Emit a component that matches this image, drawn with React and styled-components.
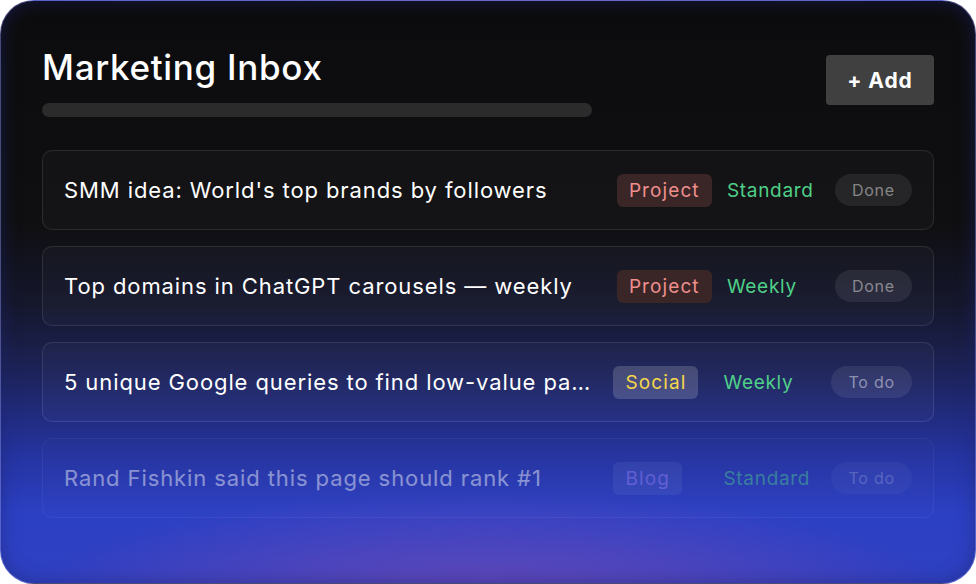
import styled, { createGlobalStyle } from "styled-components";

const tasks = [
  { title: "SMM idea: World's top brands by followers", tag: "project", freq: "Standard", status: "Done" },
  { title: "Top domains in ChatGPT carousels — weekly", tag: "project", freq: "Weekly", status: "Done" },
  { title: "5 unique Google queries to find low-value pages to noindex", tag: "social", freq: "Weekly", status: "To do" },
  { title: "Rand Fishkin said this page should rank #1", tag: "blog", freq: "Standard", status: "To do", faded: true },
];

const tagLabels = { project: "Project", social: "Social", blog: "Blog" };

const tagColors = {
  project: { bg: "#3a2627", fg: "#ee8f8d" },
  social: { bg: "rgba(255,255,255,0.17)", fg: "#f6d84a" },
  blog: { bg: "rgba(255,255,255,0.12)", fg: "#a58eff" },
};

export default function App() {
  return (
    <>
      <GlobalStyle />
      <Card>
        <Header>
          <div>
            <Title>Marketing Inbox</Title>
            <Bar />
          </div>
          <AddButton>+ Add</AddButton>
        </Header>
        <List>
          {tasks.map((t) => (
            <Row key={t.title} $faded={t.faded}>
              <RowTitle>{t.title}</RowTitle>
              <TagCell>
                <Tag $kind={t.tag}>{tagLabels[t.tag]}</Tag>
              </TagCell>
              <Freq>{t.freq}</Freq>
              <Status>{t.status}</Status>
            </Row>
          ))}
        </List>
      </Card>
    </>
  );
}

const GlobalStyle = createGlobalStyle`
  html, body {
    margin: 0;
    padding: 0;
    background: #ffffff;
  }
  body {
    font-family: Inter, "Liberation Sans", sans-serif;
  }
`;

const Card = styled.div`
  box-sizing: border-box;
  width: 976px;
  height: 584px;
  border-radius: 34px;
  border: 1.5px solid rgba(120, 128, 210, 0.55);
  padding: 44px 41px 0 41px;
  overflow: hidden;
  background:
    radial-gradient(ellipse 480px 130px at 50% 106%, rgba(118, 76, 182, 0.9), rgba(118, 76, 182, 0) 100%),
    linear-gradient(180deg, #0c0c0e 0%, #0f0f11 38%, #15172c 52%, #1c2256 63%, #2534a0 78%, #2c40c4 88%, #2f40c2 100%);
  box-shadow: inset 0 0 18px rgba(30, 36, 110, 0.55);
`;

const Header = styled.div`
  display: flex;
  justify-content: space-between;
  align-items: flex-start;
`;

const Title = styled.h1`
  margin: 0;
  font-family: Inter, "Liberation Sans", sans-serif;
  font-weight: 500;
  font-size: 35px;
  letter-spacing: 0.7px;
  line-height: 44px;
  color: #ffffff;
`;

const Bar = styled.div`
  margin-top: 14px;
  width: 550px;
  height: 14px;
  border-radius: 7px;
  background: #2b2b2c;
`;

const AddButton = styled.button`
  margin-top: 10px;
  width: 108px;
  height: 50px;
  border: none;
  border-radius: 4px;
  background: #404040;
  color: #ffffff;
  font-family: Inter, "Liberation Sans", sans-serif;
  font-weight: 700;
  font-size: 21px;
  letter-spacing: 0.9px;
`;

const List = styled.div`
  margin-top: 33px;
  display: flex;
  flex-direction: column;
  gap: 16px;
`;

const Row = styled.div`
  box-sizing: border-box;
  height: 80px;
  display: flex;
  align-items: center;
  padding: 0 21px 0 21px;
  border: 1.5px solid rgba(255, 255, 255, 0.1);
  border-radius: 10px;
  background: rgba(255, 255, 255, 0.025);
  opacity: ${(p) => (p.$faded ? 0.45 : 1)};
`;

const RowTitle = styled.div`
  flex: 1;
  min-width: 0;
  padding-right: 20px;
  white-space: nowrap;
  overflow: hidden;
  text-overflow: ellipsis;
  font-size: 22px;
  letter-spacing: 0.9px;
  color: #ffffff;
`;

const TagCell = styled.div`
  width: 110px;
  flex: none;
`;

const Tag = styled.span`
  display: inline-block;
  padding: 4px 12px;
  border-radius: 6px;
  font-size: 19px;
  line-height: 25px;
  letter-spacing: 1.1px;
  background: ${(p) => tagColors[p.$kind].bg};
  color: ${(p) => tagColors[p.$kind].fg};
`;

const Freq = styled.div`
  width: 108px;
  flex: none;
  font-size: 19px;
  letter-spacing: 0.7px;
  color: #4fd088;
`;

const Status = styled.div`
  flex: none;
  padding: 0 17px;
  height: 32px;
  line-height: 32px;
  border-radius: 16px;
  background: rgba(255, 255, 255, 0.08);
  color: rgba(255, 255, 255, 0.45);
  font-size: 16px;
  letter-spacing: 0.8px;
`;
